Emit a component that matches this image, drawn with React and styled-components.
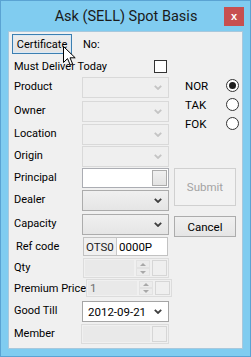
import React, { useState } from "react";
import styled, { createGlobalStyle, css } from "styled-components";

const GlobalStyle = createGlobalStyle`
  html, body {
    margin: 0;
    padding: 0;
    background: #ffffff;
    overflow: hidden;
  }
  * {
    box-sizing: border-box;
  }
`;

const Chevron = ({ color }) => (
  <svg width="8" height="5" viewBox="0 0 8 5">
    <polyline points="0.8,0.8 4,4 7.2,0.8" fill="none" stroke={color} strokeWidth="1.8" />
  </svg>
);

const Cursor = () => (
  <CursorWrap>
    <svg width="13" height="20" viewBox="0 0 13 20">
      <path
        d="M0.5 0.5 L0.5 16.5 L4.5 12.6 L7.2 18.8 L9.6 17.8 L7 11.8 L12.2 11.8 Z"
        fill="#ffffff"
        stroke="#000000"
        strokeWidth="1"
        strokeLinejoin="miter"
      />
    </svg>
  </CursorWrap>
);

const Combo = ({ enabled, white, value }) => (
  <ComboBox $enabled={enabled} $white={white}>
    <ComboText>{value}</ComboText>
    <Chevron color={enabled ? "#3f3f3f" : "#c4c4c4"} />
  </ComboBox>
);

const Spinner = () => (
  <SpinBox>
    <SpinHalf>
      <ArrowUp />
    </SpinHalf>
    <SpinHalf>
      <ArrowDown />
    </SpinHalf>
  </SpinBox>
);

const Field = ({ label, height, children, indent }) => (
  <Row $h={height}>
    <Label $indent={indent}>{label}</Label>
    {children}
  </Row>
);

const App = () => {
  const [mode, setMode] = useState("NOR");
  const [deliver, setDeliver] = useState(false);

  return (
    <>
      <GlobalStyle />
      <Window>
        <TitleBar>
          <Title>Ask (SELL) Spot Basis</Title>
          <CloseButton>x</CloseButton>
        </TitleBar>
        <Client>
          <TopRow>
            <FocusButton>Certificate</FocusButton>
            <NoLabel>No:</NoLabel>
          </TopRow>
          <Main>
            <LeftCol>
              <Row $h={20}>
                <Label>Must Deliver Today</Label>
                <CheckBox onClick={() => setDeliver(!deliver)} $checked={deliver} />
              </Row>
              <Field label="Product" height={24}>
                <Combo />
              </Field>
              <Field label="Owner" height={23}>
                <Combo />
              </Field>
              <Field label="Location" height={22}>
                <Combo />
              </Field>
              <Field label="Origin" height={22}>
                <Combo />
              </Field>
              <Field label="Principal" height={22}>
                <TextBox $h={20}>
                  <BrowseButton />
                </TextBox>
              </Field>
              <Field label="Dealer" height={24}>
                <Combo enabled />
              </Field>
              <Field label="Capacity" height={23}>
                <Combo enabled />
              </Field>
              <Field label="Ref code" height={21} indent={2}>
                <RefBox>
                  <RefPrefix>OTS0</RefPrefix>
                  <RefValue>0000P</RefValue>
                </RefBox>
              </Field>
              <Field label="Qty" height={21}>
                <NumBox>
                  <NumText />
                  <Spinner />
                  <SmallBox />
                </NumBox>
              </Field>
              <Field label="Premium Price" height={22}>
                <NumBox $h={18}>
                  <NumText>1</NumText>
                  <Spinner />
                  <SmallBox />
                </NumBox>
              </Field>
              <Field label="Good Till" height={23}>
                <Combo enabled white value="2012-09-21" />
              </Field>
              <Field label="Member" height={20}>
                <MemberBox>
                  <MemberText />
                  <SmallBox />
                </MemberBox>
              </Field>
            </LeftCol>
            <RightCol>
              {["NOR", "TAK", "FOK"].map((m) => (
                <RadioRow key={m} onClick={() => setMode(m)}>
                  <RadioLabel>{m}</RadioLabel>
                  <Radio $checked={mode === m} />
                </RadioRow>
              ))}
              <Button $disabled $h={38} $mt={35}>
                Submit
              </Button>
              <Button $h={21} $mt={10}>
                Cancel
              </Button>
            </RightCol>
          </Main>
        </Client>
        <Cursor />
      </Window>
    </>
  );
};

export default App;

const uiFont = css`
  font-family: Roboto, "Liberation Sans", Arial, sans-serif;
  font-size: 11px;
`;

const Window = styled.div`
  position: relative;
  width: 251px;
  height: 357px;
  background: #80ccf0;
  border: 1px solid #5aa3d3;
  padding: 0 7px 7px 7px;
  display: flex;
  flex-direction: column;
`;

const TitleBar = styled.div`
  height: 30px;
  display: flex;
  align-items: center;
  justify-content: center;
  position: relative;
`;

const Title = styled.div`
  font-family: Roboto, "Liberation Sans", Arial, sans-serif;
  font-size: 14.5px;
  color: #1a1a1a;
  margin-top: 1px;
  margin-left: 1px;
`;

const CloseButton = styled.div`
  position: absolute;
  right: -1px;
  top: 6px;
  width: 20px;
  height: 19px;
  background: #c75050;
  color: #ffffff;
  font-family: "Liberation Sans", Arial, sans-serif;
  font-weight: bold;
  font-size: 11px;
  display: flex;
  align-items: center;
  justify-content: center;
  padding-bottom: 2px;
`;

const Client = styled.div`
  flex: 1;
  background: #f0f0f0;
  border: 1px solid #a7c8dd;
  padding: 2px 0 0 3px;
  ${uiFont};
  color: #000000;
`;

const TopRow = styled.div`
  display: flex;
  align-items: center;
  height: 20px;
`;

const FocusButton = styled.div`
  width: 60px;
  height: 20px;
  border: 1px solid #3c7fb1;
  background: linear-gradient(#ececec, #e3e3e3);
  display: flex;
  align-items: center;
  justify-content: center;
  box-shadow: inset 0 0 0 1px #dbe9f5;
`;

const NoLabel = styled.div`
  margin-left: 11px;
  padding-top: 1px;
`;

const Main = styled.div`
  display: flex;
  margin-top: 3px;
  margin-left: -3px;
`;

const LeftCol = styled.div`
  width: 160px;
  display: flex;
  flex-direction: column;
`;

const Row = styled.div`
  height: ${(p) => p.$h}px;
  display: flex;
  align-items: flex-start;
  justify-content: space-between;
  padding-left: 5px;
`;

const Label = styled.div`
  padding-left: ${(p) => p.$indent || 0}px;
  padding-top: 3px;
  white-space: nowrap;
`;

const CheckBox = styled.div`
  width: 13px;
  height: 13px;
  margin-top: 3px;
  margin-right: 2px;
  border: 1px solid #333333;
  background: #ffffff;
`;

const ComboBox = styled.div`
  width: 87px;
  height: 21px;
  flex-shrink: 0;
  display: flex;
  align-items: center;
  justify-content: space-between;
  padding: 0 6px 0 5px;
  border: 1px solid ${(p) => (p.$white ? "#a5a5a5" : p.$enabled ? "#acacac" : "#d9d9d9")};
  background: ${(p) =>
    p.$white ? "#ffffff" : p.$enabled ? "linear-gradient(#f0f0f0, #e5e5e5)" : "#efefef"};
`;

const ComboText = styled.div`
  font-size: 11.5px;
`;

const TextBox = styled.div`
  width: 87px;
  height: ${(p) => p.$h}px;
  border: 1px solid #abadb3;
  background: #ffffff;
  display: flex;
  justify-content: flex-end;
  align-items: center;
  padding-right: 1px;
`;

const BrowseButton = styled.div`
  width: 15px;
  height: 16px;
  border: 1px solid #acacac;
  background: linear-gradient(#f0f0f0, #e3e3e3);
`;

const RefBox = styled.div`
  width: 85px;
  height: 19px;
  margin-right: 1px;
  display: flex;
  border: 1px solid #c2c2c2;
  font-size: 11.5px;
`;

const RefPrefix = styled.div`
  width: 33px;
  background: #f0f0f0;
  border-right: 1px solid #c8c8c8;
  display: flex;
  align-items: center;
  padding-left: 2px;
  color: #222;
`;

const RefValue = styled.div`
  flex: 1;
  background: #ffffff;
  display: flex;
  align-items: center;
  padding-left: 2px;
`;

const NumBox = styled.div`
  width: 86px;
  height: ${(p) => p.$h || 20}px;
  border: 1px solid #dcdcdc;
  background: #f0f0f0;
  display: flex;
  align-items: stretch;
  padding: 1px;
  gap: 1px;
`;

const NumText = styled.div`
  width: 50px;
  background: #e9e9e9;
  color: #6d6d6d;
  font-size: 11.5px;
  display: flex;
  align-items: center;
  padding-left: 2px;
`;

const SpinBox = styled.div`
  width: 14px;
  margin-left: 1px;
  display: flex;
  flex-direction: column;
`;

const SpinHalf = styled.div`
  flex: 1;
  display: flex;
  align-items: center;
  justify-content: center;
  border: 1px solid #e2e2e2;
  background: #ececec;
`;

const ArrowUp = styled.div`
  width: 0;
  height: 0;
  border-left: 3px solid transparent;
  border-right: 3px solid transparent;
  border-bottom: 3px solid #a8a8a8;
`;

const ArrowDown = styled.div`
  width: 0;
  height: 0;
  border-left: 3px solid transparent;
  border-right: 3px solid transparent;
  border-top: 3px solid #a8a8a8;
`;

const SmallBox = styled.div`
  width: 15px;
  margin-left: 1px;
  border: 1px solid #d6d6d6;
  background: #efefef;
`;

const MemberBox = styled.div`
  width: 88px;
  height: 20px;
  border: 1px solid #dcdcdc;
  background: #f0f0f0;
  display: flex;
  padding: 1px 1px 1px 1px;
  gap: 1px;
`;

const MemberText = styled.div`
  flex: 1;
  background: #e9e9e9;
`;

const RightCol = styled.div`
  width: 66px;
  margin-left: 5px;
  padding-top: 19px;
  display: flex;
  flex-direction: column;
`;

const RadioRow = styled.div`
  height: 19px;
  display: flex;
  align-items: center;
  justify-content: space-between;
  padding-left: 11px;
  padding-right: 1px;
`;

const RadioLabel = styled.div`
  font-size: 11.5px;
`;

const Radio = styled.div`
  width: 13px;
  height: 13px;
  border-radius: 50%;
  border: 1px solid #333333;
  background: #ffffff;
  display: flex;
  align-items: center;
  justify-content: center;
  &::after {
    content: "";
    width: 7px;
    height: 7px;
    border-radius: 50%;
    background: ${(p) => (p.$checked ? "#1e1e1e" : "transparent")};
  }
`;

const Button = styled.div`
  width: 62px;
  height: ${(p) => p.$h}px;
  margin-top: ${(p) => p.$mt}px;
  display: flex;
  align-items: center;
  justify-content: center;
  font-size: 11.5px;
  border: 1px solid ${(p) => (p.$disabled ? "#d0d0d0" : "#acacac")};
  background: ${(p) => (p.$disabled ? "#f2f2f2" : "linear-gradient(#f0f0f0, #e5e5e5)")};
  color: ${(p) => (p.$disabled ? "#a3a3a3" : "#000000")};
`;

const CursorWrap = styled.div`
  position: absolute;
  left: 62px;
  top: 45px;
  width: 13px;
  height: 20px;
  line-height: 0;
  pointer-events: none;
`;
